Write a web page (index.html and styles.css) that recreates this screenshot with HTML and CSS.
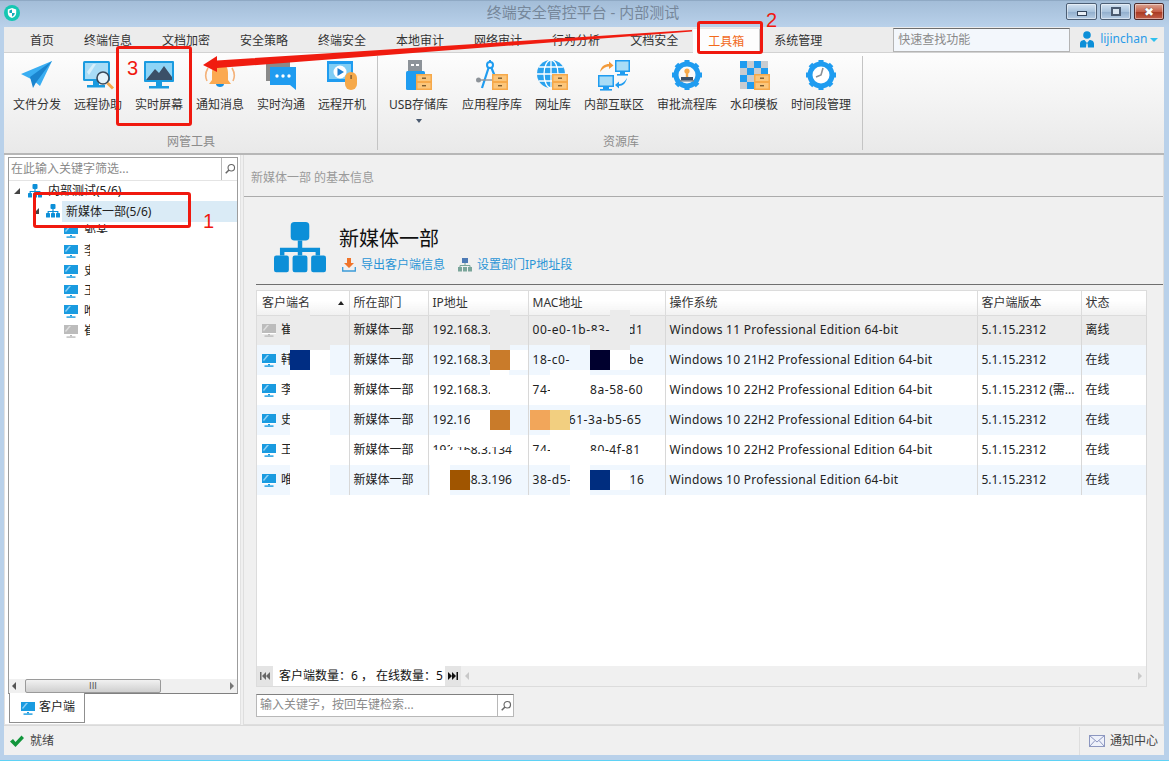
FILE: index.html
```html
<!DOCTYPE html>
<html lang="zh-CN">
<head>
<meta charset="utf-8">
<title>终端安全管控平台 - 内部测试</title>
<link rel="stylesheet" href="styles.css">
</head>
<body>
<svg class="defs" width="0" height="0" aria-hidden="true">
  <defs>
    <symbol id="drawer" viewBox="0 0 16 16">
      <rect x="0" y="0" width="16" height="16" fill="#f6a94a"/>
      <rect x="1.5" y="1.5" width="13" height="5.5" fill="#fbc67c"/>
      <rect x="1.5" y="9" width="13" height="5.5" fill="#fbc67c"/>
      <rect x="6" y="3.5" width="4" height="1.4" fill="#7a5a30"/>
      <rect x="6" y="11" width="4" height="1.4" fill="#7a5a30"/>
    </symbol>
    <symbol id="pc" viewBox="0 0 14 14">
      <rect x="0" y="1" width="14" height="9" fill="#1a9be0"/>
      <path d="M1 7 L5 2 H7 L2 8Z" fill="#8fd0f5"/>
      <rect x="0" y="10" width="14" height="1" fill="#fff"/>
      <rect x="6" y="11" width="2" height="1.4" fill="#1a9be0"/>
      <rect x="2.5" y="12.4" width="9" height="1.4" fill="#1a9be0"/>
    </symbol>
    <symbol id="pc-off" viewBox="0 0 14 14">
      <rect x="0" y="1" width="14" height="9" fill="#bcbcbc"/>
      <path d="M1 7 L5 2 H7 L2 8Z" fill="#dedede"/>
      <rect x="0" y="10" width="14" height="1" fill="#fff"/>
      <rect x="6" y="11" width="2" height="1.4" fill="#bcbcbc"/>
      <rect x="2.5" y="12.4" width="9" height="1.4" fill="#bcbcbc"/>
    </symbol>
    <symbol id="org" viewBox="0 0 14 14">
      <rect x="4.5" y="0" width="5" height="5" rx="1" fill="#0c8fd8"/>
      <path d="M7 5 V7 M2.2 9 V7.5 H11.8 V9 M7 7 V9" stroke="#0c8fd8" stroke-width="1.2" fill="none"/>
      <rect x="0" y="9" width="4" height="4.5" rx=".6" fill="#0c8fd8"/>
      <rect x="5" y="9" width="4" height="4.5" rx=".6" fill="#0c8fd8"/>
      <rect x="10" y="9" width="4" height="4.5" rx=".6" fill="#0c8fd8"/>
    </symbol>
    <symbol id="lens" viewBox="0 0 14 14">
      <circle cx="8.5" cy="5.5" r="3.8" fill="none" stroke="#666" stroke-width="1.3"/>
      <path d="M5.8 8.2 L2 12" stroke="#666" stroke-width="1.8"/>
    </symbol>
  </defs>
</svg>

<div class="window">
  <header class="titlebar">
    <svg class="logo" viewBox="0 0 16 16"><circle cx="8" cy="8" r="8" fill="#14c7b2"/><path d="M8 3 L12.2 4.5 V8 C12.2 10.5 10.4 12.2 8 13 C5.6 12.2 3.8 10.5 3.8 8 V4.5Z" fill="#fff"/><path d="M8 4.6 V8 H5.4 V5.6Z M8 8 H10.8 C10.6 9.8 9.5 10.9 8 11.5Z" fill="#14a9b8"/></svg>
    <div class="title">终端安全管控平台 - 内部测试</div>
    <div class="win-btns">
      <div class="win-btn"><span class="glyph-min"></span></div>
      <div class="win-btn"><span class="glyph-max"></span></div>
      <div class="win-btn close"><span class="glyph-close">✖</span></div>
    </div>
  </header>

  <div class="shell">
    <nav class="tabs">
      <a class="tab">首页</a><a class="tab">终端信息</a><a class="tab">文档加密</a><a class="tab">安全策略</a><a class="tab">终端安全</a><a class="tab">本地审计</a><a class="tab">网络审计</a><a class="tab">行为分析</a><a class="tab">文档安全</a><a class="tab active">工具箱</a><a class="tab">系统管理</a>
      <div class="quick">快速查找功能</div>
      <div class="user">
        <svg class="user-icon" viewBox="0 0 14 17"><circle cx="7" cy="4" r="3.8" fill="#0c8fd8"/><path d="M0 16.5 V12.5 C0 10 2.5 9 4.5 9 L7 12 L9.5 9 C11.5 9 14 10 14 12.5 V16.5 H8 L7.6 12.5 H6.4 L6 16.5Z" fill="#0c8fd8"/></svg>
        <span>lijinchan</span><i class="caret-cyan"></i>
      </div>
    </nav>

    <section class="ribbon">
      <div class="group g1">
        <div class="btns">
          <div class="rb"><svg class="ri" viewBox="0 0 32 32"><path d="M0 14 L31 1 L19 26 L12 20Z" fill="#3aaef2"/><path d="M31 1 L9 17 L12 28 L15 22.5Z" fill="#1b85cf"/></svg><span>文件分发</span></div>
          <div class="rb"><svg class="ri" viewBox="0 0 32 32"><rect x="1" y="1" width="27" height="20" rx="1.5" fill="#1a9be0"/><rect x="3" y="3" width="23" height="16" fill="#a8dcf6"/><path d="M5 12 L11 4 H14 L7 15Z" fill="#d6f0fc"/><rect x="11" y="21" width="6" height="4" fill="#1a9be0"/><rect x="5" y="25" width="18" height="2.5" fill="#1a9be0"/><path d="M25.5 23 L31 28.5" stroke="#f6a94a" stroke-width="3"/><circle cx="21" cy="18" r="6" fill="#e5f3fa" stroke="#3a4a5a" stroke-width="1.6"/></svg><span>远程协助</span></div>
          <div class="rb"><svg class="ri" viewBox="0 0 32 32"><rect x="1" y="1" width="30" height="21" rx="1" fill="#1a9be0"/><rect x="3" y="3" width="26" height="17" fill="#8ed4f6"/><path d="M3 20 L12 9 L16 13 L21 6 L29 17 V20Z" fill="#3b5068"/><rect x="13" y="22" width="6" height="4" fill="#1a9be0"/><rect x="6" y="26" width="20" height="2.5" fill="#1a9be0"/></svg><span>实时屏幕</span></div>
          <div class="rb"><svg class="ri" viewBox="0 0 32 32"><path d="M16 3 C10 3 8 8 8 13 V20 L5 24 H27 L24 20 V13 C24 8 22 3 16 3Z" fill="#fba950"/><path d="M12 24 H20 C20 28 12 28 12 24Z" fill="#1a8fdc"/><path d="M4 8 C1 13 1 17 3 21 M28 8 C31 13 31 17 29 21" stroke="#f4b27a" stroke-width="1.6" fill="none"/></svg><span>通知消息</span></div>
          <div class="rb"><svg class="ri" viewBox="0 0 32 32"><rect x="1" y="1" width="24" height="20" fill="#8a8a8a"/><rect x="5" y="7" width="26" height="18" fill="#1f9cf0"/><path d="M25 25 H31 V30Z" fill="#1f9cf0"/><circle cx="12" cy="16" r="1.7" fill="#fff"/><circle cx="18" cy="16" r="1.7" fill="#fff"/><circle cx="24" cy="16" r="1.7" fill="#fff"/></svg><span>实时沟通</span></div>
          <div class="rb"><svg class="ri" viewBox="0 0 32 32"><rect x="1" y="1" width="26" height="21" fill="#1f9cf0"/><rect x="3" y="4" width="22" height="15" fill="#7fcdf5"/><circle cx="14" cy="12" r="6.5" fill="#fff"/><path d="M11.5 8 L18 12 L11.5 16Z" fill="#1f7fd0"/><rect x="19" y="12" width="12" height="18" rx="6" fill="#f6a94a"/><rect x="24.4" y="15" width="1.4" height="4" fill="#7a5a30"/></svg><span>远程开机</span></div>
        </div>
        <div class="group-label">网管工具</div>
      </div>
      <div class="group g2">
        <div class="btns">
          <div class="rb"><svg class="ri" viewBox="0 0 32 32"><rect x="5" y="0" width="14" height="11" fill="#8d9399"/><rect x="8" y="4" width="3" height="2" fill="#fff"/><rect x="13" y="4" width="3" height="2" fill="#fff"/><rect x="3" y="11" width="19" height="19" rx="1.5" fill="#1f9cf0"/><use href="#drawer" x="13" y="14" width="16" height="16"/></svg><span>USB存储库</span><i class="caret-dark"></i></div>
          <div class="rb"><svg class="ri" viewBox="0 0 32 32"><circle cx="14" cy="5" r="3" fill="none" stroke="#1f9cf0" stroke-width="2"/><path d="M12.5 8 L6 28 M15.5 8 L20 19" stroke="#1f9cf0" stroke-width="2.2"/><rect x="13" y="0" width="2" height="2" fill="#1f9cf0"/><circle cx="2.5" cy="20" r="2.5" fill="#8d9399"/><path d="M3 20 H16" stroke="#8d9399" stroke-width="1.4"/><use href="#drawer" x="16" y="14" width="16" height="16"/></svg><span>应用程序库</span></div>
          <div class="rb"><svg class="ri" viewBox="0 0 32 32"><circle cx="14" cy="14" r="14" fill="#2aa2ee"/><path d="M14 0 V28 M0 14 H28 M2 7 H26 M2 21 H26" stroke="#fff" stroke-width="1.3"/><ellipse cx="14" cy="14" rx="7" ry="14" fill="none" stroke="#fff" stroke-width="1.3"/><use href="#drawer" x="15" y="14" width="16" height="16"/></svg><span>网址库</span></div>
          <div class="rb"><svg class="ri" viewBox="0 0 32 32"><rect x="17" y="0" width="15" height="12" fill="#1f9cf0"/><rect x="18.5" y="1.5" width="12" height="9" fill="#a8dcf6"/><rect x="22" y="12" width="5" height="3" fill="#1f9cf0"/><rect x="19" y="14" width="11" height="1.6" fill="#1f9cf0"/><rect x="0" y="15" width="16" height="12" fill="#1f9cf0"/><rect x="1.5" y="16.5" width="13" height="9" fill="#a8dcf6"/><rect x="5" y="27" width="6" height="2.5" fill="#1f9cf0"/><rect x="2" y="29" width="12" height="1.6" fill="#1f9cf0"/><path d="M2 12 C3 6 7 4 11 4 L11 1.5 L15.5 5.5 L11 9 L11 6.5 C8 6.5 5 8 2 12Z" fill="#f39a3a"/><path d="M29 18 C28 23 25 26 21 26 L21 28.5 L17 25 L21 21.5 L21 24 C24 24 26.5 22 29 18Z" fill="#1f9cf0"/></svg><span>内部互联区</span></div>
          <div class="rb"><svg class="ri" viewBox="0 0 32 32"><circle cx="16" cy="15" r="11" fill="none" stroke="#1f9cf0" stroke-width="5"/><g stroke="#1f9cf0" stroke-width="5"><path d="M16 0 V4 M16 26 V30 M1 15 H5 M27 15 H31 M5.4 4.4 L8.2 7.2 M23.8 22.8 L26.6 25.6 M26.6 4.4 L23.8 7.2 M5.4 25.6 L8.2 22.8"/></g><circle cx="16" cy="11" r="2.6" fill="#f6a94a"/><rect x="14.8" y="12" width="2.4" height="5" fill="#f6a94a"/><rect x="10" y="17" width="12" height="3" fill="#3b5068"/><rect x="9" y="20" width="14" height="1.6" fill="#7a8a99"/></svg><span>审批流程库</span></div>
          <div class="rb"><svg class="ri" viewBox="0 0 32 32"><rect x="2" y="1" width="28" height="28" fill="#c9ccd0"/><g fill="#1f9cf0"><rect x="2" y="1" width="7" height="7"/><rect x="16" y="1" width="7" height="7"/><rect x="9" y="8" width="7" height="7"/><rect x="23" y="8" width="7" height="7"/><rect x="2" y="15" width="7" height="7"/><rect x="9" y="22" width="7" height="7"/></g><use href="#drawer" x="16" y="14" width="16" height="16"/></svg><span>水印模板</span></div>
          <div class="rb"><svg class="ri" viewBox="0 0 32 32"><circle cx="16" cy="15" r="11" fill="#fff" stroke="#1f9cf0" stroke-width="5"/><g stroke="#1f9cf0" stroke-width="5"><path d="M16 0 V4 M16 26 V30 M1 15 H5 M27 15 H31 M5.4 4.4 L8.2 7.2 M23.8 22.8 L26.6 25.6 M26.6 4.4 L23.8 7.2 M5.4 25.6 L8.2 22.8"/></g><path d="M18 8 L16 15 L11 17" stroke="#8a8f95" stroke-width="1.6" fill="none"/></svg><span>时间段管理</span></div>
        </div>
        <div class="group-label">资源库</div>
      </div>
    </section>

    <main class="main">
      <aside class="left">
        <div class="tree-box">
          <div class="filter"><span class="ph">在此输入关键字筛选...</span><div class="lens-cell"><svg class="lens"><use href="#lens"/></svg></div></div>
          <div class="tree">
            <div class="node root"><i class="exp"></i><svg class="ni"><use href="#org"/></svg><span>内部测试(5/6)</span></div>
            <div class="node dept"><i class="exp"></i><svg class="ni"><use href="#org"/></svg><span class="sel">新媒体一部(5/6)</span></div>
            <div class="node leaf"><svg class="ni"><use href="#pc"/></svg><span>郭某</span></div>
            <div class="node leaf"><svg class="ni"><use href="#pc"/></svg><span>李</span></div>
            <div class="node leaf"><svg class="ni"><use href="#pc"/></svg><span>史</span></div>
            <div class="node leaf"><svg class="ni"><use href="#pc"/></svg><span>王</span></div>
            <div class="node leaf"><svg class="ni"><use href="#pc"/></svg><span>唯</span></div>
            <div class="node leaf"><svg class="ni"><use href="#pc-off"/></svg><span>崔</span></div>
          </div>
          <div class="hscroll"><i class="arr-l"></i><div class="thumb"><span>III</span></div><i class="arr-r"></i></div>
        </div>
        <div class="ltab"><svg class="ltab-i"><use href="#pc"/></svg><span>客户端</span></div>
      </aside>

      <section class="right">
        <div class="crumb">新媒体一部 的基本信息</div>
        <div class="dept-head">
          <svg class="big-org" viewBox="0 0 14 14"><use href="#org"/></svg>
          <div class="dept-info">
            <h1>新媒体一部</h1>
            <div class="links">
              <a><svg class="li" viewBox="0 0 14 14"><path d="M5 0 H9 V5 H12 L7 10 L2 5 H5Z" fill="#f0742a"/><path d="M.7 9 V13 H13.3 V9" fill="none" stroke="#3b9bd8" stroke-width="1.3"/></svg>导出客户端信息</a>
              <a><svg class="li" viewBox="0 0 14 14"><rect x="4" y="0" width="6" height="5" fill="#4d7ab5"/><path d="M7 5 V8 M2 9 V7.5 H12 V9" stroke="#7aa59a" fill="none"/><rect x="0" y="9" width="4" height="4.5" fill="#7aa59a"/><rect x="5" y="9" width="4" height="4.5" fill="#7aa59a"/><rect x="10" y="9" width="4" height="4.5" fill="#7aa59a"/></svg>设置部门IP地址段</a>
            </div>
          </div>
        </div>
        <div class="rule"></div>
        <div class="grid-box">
          <div class="grid-scroll">
            <table class="grid">
              <colgroup><col class="c1"><col class="c2"><col class="c3"><col class="c4"><col class="c5"><col class="c6"><col class="c7"></colgroup>
              <thead><tr><th class="nm-h">客户端名<i class="sort"></i></th><th>所在部门</th><th>IP地址</th><th>MAC地址</th><th>操作系统</th><th>客户端版本</th><th>状态</th></tr></thead>
              <tbody>
                <tr class="off"><td class="nm"><svg class="ti"><use href="#pc-off"/></svg>崔</td><td>新媒体一部</td><td class="ip">192.168.3.10</td><td class="mac">00-e0-1b-83-6c-d1</td><td class="os">Windows 11 Professional Edition 64-bit</td><td>5.1.15.2312</td><td>离线</td></tr>
                <tr class="alt"><td class="nm"><svg class="ti"><use href="#pc"/></svg>韩</td><td>新媒体一部</td><td class="ip">192.168.3.</td><td class="mac">18-c0-<span class="mac-tail">be</span></td><td class="os">Windows 10 21H2 Professional Edition 64-bit</td><td>5.1.15.2312</td><td>在线</td></tr>
                <tr><td class="nm"><svg class="ti"><use href="#pc"/></svg>李</td><td>新媒体一部</td><td class="ip">192.168.3.56</td><td class="mac">74-86-7a-8a-58-60</td><td class="os">Windows 10 22H2 Professional Edition 64-bit</td><td>5.1.15.2312 (需...</td><td>在线</td></tr>
                <tr class="alt"><td class="nm"><svg class="ti"><use href="#pc"/></svg>史</td><td>新媒体一部</td><td class="ip">192.168.3.90</td><td class="mac">f4-b5-61-3a-b5-65</td><td class="os">Windows 10 22H2 Professional Edition 64-bit</td><td>5.1.15.2312</td><td>在线</td></tr>
                <tr><td class="nm"><svg class="ti"><use href="#pc"/></svg>王</td><td>新媒体一部</td><td class="ip">192.168.3.134</td><td class="mac">74-86-7a-80-4f-81</td><td class="os">Windows 10 22H2 Professional Edition 64-bit</td><td>5.1.15.2312</td><td>在线</td></tr>
                <tr class="alt"><td class="nm"><svg class="ti"><use href="#pc"/></svg>唯</td><td>新媒体一部</td><td class="ip">192.168.3.196</td><td class="mac">38-d5-<span class="mac-tail tail2">16</span></td><td class="os">Windows 10 Professional Edition 64-bit</td><td>5.1.15.2312</td><td>在线</td></tr>
              </tbody>
            </table>
          </div>
          <div class="grid-foot">
            <div class="pg"><svg class="pg-i" viewBox="0 0 10 8"><path d="M0 0 H1.5 V8 H0Z M6 0 V8 L2 4Z M10 0 V8 L6 4Z" fill="#666"/></svg></div>
            <div class="count">客户端数量：6 ， 在线数量：5</div>
            <div class="pg"><svg class="pg-i" viewBox="0 0 10 8"><path d="M0 0 V8 L4 4Z M4 0 V8 L8 4Z M8.5 0 H10 V8 H8.5Z" fill="#111"/></svg></div>
            <div class="gscroll"><i class="arr-l pale"></i><i class="arr-r pale"></i></div>
          </div>
        </div>
        <div class="search"><span class="ph">输入关键字，按回车键检索...</span><div class="lens-cell"><svg class="lens"><use href="#lens"/></svg></div></div>
      </section>
    </main>

    <footer class="status">
      <svg class="ok" viewBox="0 0 14 12"><path d="M0 6.5 L3 4 L5.5 7 L11.5 0.5 L14 3 L5.5 12Z" fill="#12963c"/></svg>
      <span class="ready">就绪</span>
      <div class="notice"><svg class="mail" viewBox="0 0 16 12"><rect x=".5" y=".5" width="15" height="11" fill="#eef1fa" stroke="#8c97c0"/><path d="M.5 .5 L8 7 L15.5 .5 M.5 11.5 L6 5.5 M15.5 11.5 L10 5.5" fill="none" stroke="#8c97c0"/></svg>通知中心</div>
    </footer>
  </div>
  <div class="base"></div>

  <!-- privacy patches painted on the original screenshot -->
  <div class="patch w tn0"></div><div class="patch w tn"></div>
  <div class="patch gr n0"></div><div class="patch gr n0b"></div>
  <div class="patch w n1"></div><div class="patch navy n1b"></div><div class="patch w n2"></div><div class="patch w n3"></div>
  <div class="patch gr ip0"></div>
  <div class="patch w ip2"></div><div class="patch org ip1"></div><div class="patch org ip3"></div>
  <div class="patch w ip4"></div><div class="patch w ip5"></div><div class="patch w ip6"></div><div class="patch w ip6b"></div>
  <div class="patch w ip7"></div><div class="patch brown ip8"></div>
  <div class="patch gr m0"></div><div class="patch gr m0b"></div>
  <div class="patch ink m1"></div><div class="patch w m1b"></div><div class="patch w m2"></div>
  <div class="patch or1 m3"></div><div class="patch or2 m4"></div><div class="patch w m5"></div><div class="patch w m5b"></div><div class="patch w m6"></div>
  <div class="patch navy2 m7"></div><div class="patch w m8"></div><div class="patch w m9"></div>

  <!-- red annotations -->
  <div class="mark b1"></div><div class="mark b2"></div><div class="mark b3"></div>
  <span class="num t1">1</span><span class="num t2">2</span><span class="num t3">3</span>
  <svg class="arrow" viewBox="0 0 1169 761"><polygon points="203,65 217,56 217,60.5 692,30 692,31.5 217,68 217,72" fill="#f01c10"/></svg>
</div>
</body>
</html>
```
FILE: styles.css
```css
* { box-sizing: border-box; }
html, body { margin: 0; padding: 0; }
body { font: 12px/1.2 "Noto Sans", "Noto Sans CJK SC", sans-serif; color: #222; overflow: hidden; }
.defs { position: absolute; }
.window { position: relative; width: 1169px; height: 761px; display: flex; flex-direction: column; background: #b9d1ea; overflow: hidden; }

/* title bar */
.titlebar { height: 27px; flex: none; display: flex; align-items: center; padding: 0 5px 0 4px; background: linear-gradient(#a3bdd8, #b9d1ea); border-top: 1px solid #8fa9c4; position: relative; }
.logo { width: 16px; height: 16px; flex: none; margin-top: -2px; }
.title { position: absolute; left: 0; right: 3px; top: 1px; text-align: center; font-size: 15px; color: #76879a; line-height: 20px; }
.win-btns { margin-left: auto; display: flex; gap: 3px; align-self: flex-start; margin-top: 2px; }
.win-btn { width: 31px; height: 17px; border: 1px solid #4d5f75; border-radius: 2px; background: linear-gradient(#d3e2f1 0, #a9c3dd 50%, #92afce 55%, #b7cee5 100%); display: flex; align-items: center; justify-content: center; box-shadow: inset 0 0 0 1px rgba(255,255,255,.45); }
.win-btn.close { width: 30px; background: linear-gradient(#dba593 0, #c6604a 50%, #a93a23 55%, #c4604a 100%); border-color: #4d2a2a; }
.glyph-min { width: 10px; height: 5px; margin-top: 3px; background: #e8eef5; border: 1px solid #34445a; }
.glyph-max { width: 10px; height: 9px; border: 2px solid #4a5a70; background: #d8e4f0; }
.glyph-close { color: #fff; font: 12px/12px "DejaVu Sans", sans-serif; text-shadow: 0 0 1px #333; }

/* shell */
.shell { flex: 1; min-height: 0; margin: 0 5px 0 4px; display: flex; flex-direction: column; background: #f0f0f0; }

/* tabs */
.tabs { height: 26px; flex: none; display: flex; align-items: stretch; padding-left: 11px; background: #ececec; border-bottom: 1px solid #d2d2d2; }
.tab { padding: 0 15px; line-height: 27px; color: #333; white-space: nowrap; }
.tab.active { color: #f26a1b; background: #fdfdfd; margin-top: 2px; line-height: 25px; height: 25px; box-shadow: 1px 0 1px #c8c8c8; }
.quick { width: 177px; height: 24px; margin: 1px 0 0 56px; padding-left: 4px; line-height: 22px; color: #8a8a8a; background: #f3f7fc; border: 1px solid #b4b4b4; border-top-color: #6e6e6e; }
.user { display: flex; align-items: center; margin-left: 10px; color: #2a9be8; font-size: 12px; }
.user-icon { width: 14px; height: 17px; margin-right: 6px; }
.caret-cyan { width: 0; height: 0; margin-left: 3px; border: 4px solid transparent; border-top: 4px solid #2fc0ee; border-bottom: 0; }

/* ribbon */
.ribbon { height: 102px; flex: none; display: flex; background: linear-gradient(#fdfdfd, #e9e9e9); border-bottom: 2px solid #b7b7b7; padding-top: 3px; }
.group { display: flex; flex-direction: column; align-items: center; border-right: 1px solid #c4c4c4; height: 94px; }
.g1 { width: 374px; padding-left: 3px; }
.g2 { width: 485px; padding-left: 4px; }
.btns { display: flex; height: 77px; gap: 1px; align-self: flex-start; }
.rb { padding: 0 6px; display: flex; flex-direction: column; align-items: center; white-space: nowrap; color: #333; }
.g2 .rb:first-child { min-width: 73px; }
.ri { width: 32px; height: 32px; margin: 4px 0 5px; flex: none; }
.rb span { line-height: 16px; }
.caret-dark { width: 0; height: 0; margin-top: 6px; border: 3.5px solid transparent; border-top: 4px solid #4a5a70; border-bottom: 0; }
.group-label { line-height: 16px; color: #8c8c8c; margin-top: 1px; }
.g1 .group-label { margin-left: -2px; width: 372px; text-align: center; }
.g2 .group-label { margin-left: -2px; }

/* main */
.main { flex: 1; min-height: 0; display: flex; }
.left { width: 237px; flex: none; display: flex; flex-direction: column; padding: 2px 2px 1px 3px; background: #fff; border: 1px solid #e2e2e2; border-top: 0; }
.tree-box { flex: 1; min-height: 0; display: flex; flex-direction: column; border: 1px solid #9c9c9c; background: #fff; border-bottom-color: #808080; }
.filter { height: 23px; flex: none; display: flex; align-items: center; justify-content: space-between; padding-left: 2px; border-bottom: 1px solid #e4e4e4; }
.ph { color: #8a8a8a; }
.lens-cell { width: 16px; height: 100%; border-left: 1px solid #b8b8b8; display: flex; align-items: center; justify-content: center; flex: none; }
.lens { width: 12px; height: 12px; }
.tree { flex: 1; min-height: 0; }
.node { height: 20px; display: flex; align-items: center; position: relative; white-space: nowrap; }
.node .ni { width: 14px; height: 14px; flex: none; }
.exp { width: 0; height: 0; border-style: solid; border-width: 0 0 6px 6px; border-color: transparent transparent #444 transparent; flex: none; }
.root { padding-left: 5px; }
.root .exp { margin-right: 8px; }
.root span { margin-left: 6px; }
.dept { padding-left: 24px; }
.dept .exp { margin-right: 7px; }
.dept .sel { margin-left: 2px; flex: 1; background: #daebf6; padding-left: 4px; line-height: 21px; }
.leaf { padding-left: 55px; }
.leaf span { margin-left: 6px; }
.hscroll { height: 14px; flex: none; display: flex; align-items: center; justify-content: space-between; padding: 0 3px; background: #f0f0f0; position: relative; }
.thumb { position: absolute; left: 16px; width: 136px; top: 0; height: 14px; border: 1px solid #9a9a9a; border-radius: 2px; background: linear-gradient(#f1f1f1, #cfcfcf); display: flex; align-items: center; justify-content: center; font: 9px/10px "DejaVu Sans", sans-serif; color: #555; }
.arr-l { width: 0; height: 0; border: 4px solid transparent; border-right: 4px solid #555; border-left: 0; }
.arr-r { width: 0; height: 0; border: 4px solid transparent; border-left: 4px solid #777; border-right: 0; }
.arr-l.pale { border-right-color: #c8c8c8; }
.arr-r.pale { border-left-color: #c8c8c8; }
.ltab { width: 76px; height: 30px; margin-left: 1px; flex: none; margin-top: -1px; display: flex; align-items: center; padding-left: 11px; border: 1px solid #8f8f8f; border-top: 0; background: #fff; position: relative; color: #222; }
.ltab-i { width: 14px; height: 14px; margin-right: 4px; }

/* right */
.right { flex: 1; min-width: 0; margin-left: 2px; display: flex; flex-direction: column; background: #f0f0f0; border: 1px solid #dedede; border-top: 0; padding-top: 2px; }
.crumb { height: 40px; flex: none; padding: 1px 0 0 7px; line-height: 40px; color: #9a9a9a; border-bottom: 1px solid #ababab; }
.dept-head { height: 87px; flex: none; display: flex; padding: 25px 0 0 28px; }
.big-org { width: 56px; height: 52px; flex: none; }
.dept-info { margin-left: 11px; }
.dept-info h1 { margin: 4px 0 0; font-size: 20px; font-weight: 400; line-height: 26px; color: #111; }
.links { display: flex; gap: 13px; margin-top: 6px; margin-left: 3px; }
.links a { display: flex; align-items: center; color: #2b95d6; white-space: nowrap; }
.li { width: 14px; height: 14px; margin-right: 5px; }
.rule { height: 1px; flex: none; margin-left: 12px; background: #6f6f6f; }
.grid-box { height: 397px; flex: none; margin: 5px 16px 0 12px; background: #fff; display: flex; flex-direction: column; border: 1px solid #dcdcdc; }
.grid-scroll { flex: 1; min-height: 0; }
.grid { width: 889px; table-layout: fixed; border-collapse: collapse; }
.c1 { width: 92px; } .c2 { width: 79px; } .c3 { width: 100px; } .c4 { width: 137px; } .c5 { width: 312px; } .c6 { width: 104px; } .c7 { width: 65px; }
.grid th { height: 24px; padding: 0 4px; font-weight: 400; text-align: left; background: linear-gradient(#fff 40%, #f1f1f1); border-right: 1px solid #dcdcdc; border-bottom: 1px solid #dcdcdc; position: relative; color: #333; white-space: nowrap; }
.grid th.nm-h { padding-left: 5px; }
.grid td { height: 30px; padding: 0 4px; white-space: nowrap; overflow: hidden; border-right: 1px solid #d8d8d8; color: #222; }
.grid td.nm { padding-left: 5px; }
.grid td.os { letter-spacing: .28px; }
.grid td.mac { letter-spacing: .55px; }
.grid td.ip { letter-spacing: .1px; }
.grid tr.alt td { background: #f0f7fe; }
.grid tr.off td { background: #ebebeb; }
.ti { width: 14px; height: 14px; vertical-align: -3px; margin-right: 5px; }
.sort { position: absolute; right: 5px; top: 10px; width: 0; height: 0; border: 3.5px solid transparent; border-bottom: 4px solid #222; border-top: 0; }
.mac-tail { margin-left: 59px; }
.tail2 { margin-left: 58px; }
.grid-foot { height: 20px; flex: none; display: flex; background: #f0f0f0; }
.pg { width: 16px; display: flex; align-items: center; justify-content: center; background: #e4e4e4; flex: none; }
.pg-i { width: 10px; height: 8px; }
.count { width: 172px; padding-left: 6px; line-height: 20px; background: #fff; white-space: nowrap; flex: none; color: #111; }
.gscroll { flex: 1; display: flex; align-items: center; justify-content: space-between; padding: 0 4px; }
.search { width: 258px; height: 23px; flex: none; margin: 7px 0 0 12px; display: flex; align-items: center; justify-content: space-between; padding-left: 3px; background: #fff; border: 1px solid #b8b8b8; border-top-color: #808080; }

/* status */
.status { height: 30px; flex: none; display: flex; align-items: center; padding: 1px 0 0 6px; background: #f0f0f0; border-top: 1px solid #dadada; }
.ok { width: 14px; height: 12px; margin-right: 6px; }
.ready { color: #444; }
.notice { margin-left: auto; height: 100%; width: 85px; display: flex; align-items: center; padding-left: 9px; color: #444; border-left: 1px solid #dedede; white-space: nowrap; }
.mail { width: 16px; height: 12px; margin-right: 5px; }
.base { height: 6px; flex: none; background: linear-gradient(#b9d1ea 80%, #5fd2f5 80%); }

/* patches */
.patch { position: absolute; }
.w { background: #fff; } .gr { background: #ebebeb; } .navy { background: #002d83; } .org { background: #c97b2a; } .brown { background: #a05500; } .ink { background: #00002e; } .or1 { background: #f2a65a; } .or2 { background: #f2cf80; } .navy2 { background: #002d7f; }
.tn0 { left: 84px; top: 233px; width: 66px; height: 8px; }
.tn { left: 90px; top: 240px; width: 60px; height: 101px; }
.n0 { left: 290px; top: 310px; width: 20px; height: 40px; }
.n0b { left: 310px; top: 320px; width: 20px; height: 30px; }
.n1b { left: 290px; top: 350px; width: 20px; height: 20px; }
.n1 { left: 310px; top: 350px; width: 20px; height: 20px; }
.n2 { left: 290px; top: 370px; width: 40px; height: 35px; }
.n3 { left: 290px; top: 410px; width: 40px; height: 90px; }
.ip0 { left: 490px; top: 310px; width: 20px; height: 40px; }
.ip1 { left: 490px; top: 350px; width: 20px; height: 20px; }
.ip2 { left: 510px; top: 350px; width: 18px; height: 20px; }
.ip3 { left: 490px; top: 410px; width: 20px; height: 20px; }
.ip4 { left: 490px; top: 370px; width: 19px; height: 35px; }
.ip5 { left: 470px; top: 410px; width: 20px; height: 20px; }
.ip6 { left: 450px; top: 430px; width: 60px; height: 17px; }
.ip6b { left: 433px; top: 450px; width: 37px; height: 15px; }
.ip7 { left: 430px; top: 465px; width: 20px; height: 30px; }
.ip8 { left: 450px; top: 470px; width: 20px; height: 20px; }
.m0 { left: 610px; top: 310px; width: 20px; height: 40px; }
.m0b { left: 590px; top: 331px; width: 20px; height: 19px; }
.m1 { left: 590px; top: 350px; width: 20px; height: 20px; }
.m1b { left: 610px; top: 350px; width: 20px; height: 20px; }
.m2 { left: 550px; top: 370px; width: 40px; height: 35px; }
.m3 { left: 530px; top: 410px; width: 20px; height: 20px; }
.m4 { left: 550px; top: 410px; width: 20px; height: 20px; }
.m5 { left: 550px; top: 430px; width: 40px; height: 35px; }
.m5b { left: 533px; top: 451px; width: 17px; height: 14px; }
.m6 { left: 590px; top: 451px; width: 16px; height: 14px; }
.m7 { left: 590px; top: 470px; width: 20px; height: 20px; }
.m8 { left: 570px; top: 465px; width: 20px; height: 30px; }
.m9 { left: 610px; top: 470px; width: 20px; height: 20px; }

/* annotations */
.mark { position: absolute; border: 3px solid #f0190f; border-radius: 3px; }
.b1 { left: 33px; top: 192px; width: 158px; height: 36px; }
.b2 { left: 697px; top: 21px; width: 66px; height: 33px; }
.b3 { left: 116px; top: 46px; width: 76px; height: 80px; }
.num { position: absolute; color: #f0190f; font: 20px/24px "Liberation Sans", sans-serif; }
.t1 { left: 203px; top: 209px; }
.t2 { left: 766px; top: 8px; }
.t3 { left: 127px; top: 56px; }
.arrow { position: absolute; left: 0; top: 0; width: 1169px; height: 761px; pointer-events: none; }
```
